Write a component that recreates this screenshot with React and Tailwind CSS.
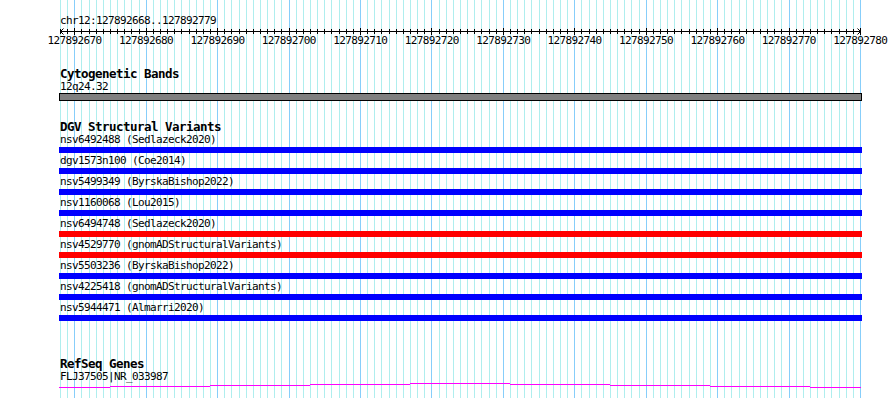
import React from 'react';

const START = 127892668;
const PX = 800 / 112;
const xOf = (k) => Math.round(60 + k * PX);
const ticks = Array.from({ length: 113 }, (_, k) => ({ k, x: xOf(k), major: (START + k) % 10 === 0 }));

const variants = [
  ['nsv6492488 (Sedlazeck2020)', 'bg-[#0000ff]'],
  ['dgv1573n100 (Coe2014)', 'bg-[#0000ff]'],
  ['nsv5499349 (ByrskaBishop2022)', 'bg-[#0000ff]'],
  ['nsv1160068 (Lou2015)', 'bg-[#0000ff]'],
  ['nsv6494748 (Sedlazeck2020)', 'bg-[#ff0000]'],
  ['nsv4529770 (gnomADStructuralVariants)', 'bg-[#ff0000]'],
  ['nsv5503236 (ByrskaBishop2022)', 'bg-[#0000ff]'],
  ['nsv4225418 (gnomADStructuralVariants)', 'bg-[#0000ff]'],
  ['nsv5944471 (Almarri2020)', 'bg-[#0000ff]'],
];

// intron "hat" of the gene, drawn as stepped segments
const hat = [
  [59, 110, 387], [110, 210, 386], [210, 310, 385], [310, 410, 384], [410, 510, 383],
  [510, 610, 384], [610, 710, 385], [710, 810, 386], [810, 861, 387],
];

function Grid() {
  return (
    <svg className="absolute inset-0" width="890" height="398">
      {ticks.map((t) => (
        <rect key={t.k} x={t.x} y="0" width="1" height="398" fill={t.major ? '#87cefa' : '#afeeee'} />
      ))}
    </svg>
  );
}

function Ruler() {
  return (
    <svg width="890" height="22" className="block">
      <line x1="60" y1="5.5" x2="860" y2="5.5" stroke="#000" />
      {ticks.map((t) => (
        <line key={t.k} x1={t.x + 0.5} x2={t.x + 0.5} y1={t.major ? 2 : 3} y2={t.major ? 9 : 8} stroke="#000" />
      ))}
      <polyline points="63.5,2.5 60.5,5.5 63.5,8.5" fill="none" stroke="#000" />
      <polyline points="857.5,2.5 860.5,5.5 857.5,8.5" fill="none" stroke="#000" />
      {ticks.filter((t) => t.major).map((t) => (
        <text key={t.k} x={60 + t.k * PX + 0.3} y="18" textAnchor="middle" fontSize="11" letterSpacing="-0.62"
          fill="#000" fontFamily="'DejaVu Sans Mono', monospace">
          {START + t.k}
        </text>
      ))}
    </svg>
  );
}

function Title({ children, className = '' }) {
  return (
    <div className={`pl-[60px] text-[12.5px] leading-[12px] tracking-[-0.52px] font-bold whitespace-pre ${className}`}>
      {children}
    </div>
  );
}

function Label({ children, className = '' }) {
  return (
    <div className={`pl-[60px] text-[11px] leading-[10px] tracking-[-0.62px] whitespace-pre ${className}`}>
      {children}
    </div>
  );
}

export default function App() {
  return (
    <div className="relative w-[890px] h-[398px] bg-white overflow-hidden text-black font-['DejaVu_Sans_Mono',monospace]">
      <Grid />
      <div className="relative flex flex-col">
        <Label className="pt-[16px]">chr12:127892668..127892779</Label>
        <Ruler />

        <Title className="mt-[20px]">Cytogenetic Bands</Title>
        <Label className="mt-[2px]">12q24.32</Label>
        <div className="mt-[1px] ml-[59px] w-[803px] h-[8px] border border-black bg-[#808080]" />

        <Title className="mt-[20px]">DGV Structural Variants</Title>
        <div className="flex flex-col mt-[-1px]">
          {variants.map(([name, color]) => (
            <div key={name} className="flex flex-col mt-[3px]">
              <Label>{name}</Label>
              <div className={`mt-[2px] ml-[59px] w-[803px] h-[6px] ${color}`} />
            </div>
          ))}
        </div>

        <Title className="mt-[37px]">RefSeq Genes</Title>
        <Label className="mt-[2px]">FLJ37505|NR_033987</Label>
        <svg width="890" height="10" className="block">
          {hat.map(([a, b, y]) => (
            <rect key={a} x={a} y={y - 382} width={b - a} height="1" fill="#ff00ff" />
          ))}
        </svg>
      </div>
    </div>
  );
}
